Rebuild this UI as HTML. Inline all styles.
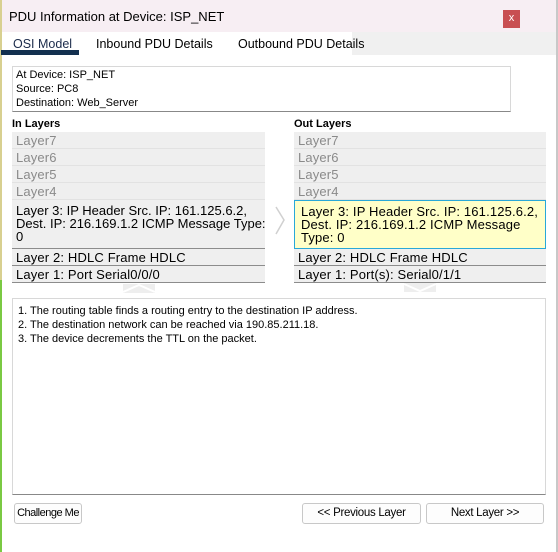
<!DOCTYPE html>
<html><head><style>
*{margin:0;padding:0;box-sizing:border-box}
body{width:558px;height:552px;background:#fff;font-family:"Liberation Sans",Arial,sans-serif;position:relative;overflow:hidden;color:#000}
.a{position:absolute}
.edge{left:0;width:2px}
.row{position:absolute;height:17px;background:#efefef;border-bottom:1px solid #e2e2e2;font-size:13px;letter-spacing:0.15px;line-height:17px;padding-left:4px;color:#8a8a8a;white-space:nowrap;overflow:hidden}
.dk{color:#000;border-bottom:1px solid #8c8c8c}
.btn{position:absolute;height:21px;border:1px solid #c8c8c8;border-radius:3px;background:#fdfdfd;font-size:11.5px;line-height:19px;text-align:center;letter-spacing:-0.3px;white-space:nowrap}
.t{font-size:11px;line-height:14px}
</style></head><body>
<div class="a edge" style="top:0;height:280px;background:#d8d090"></div>
<div class="a edge" style="top:280px;height:272px;background:#7ac943"></div>
<div class="a" style="right:0;top:0;width:2px;height:552px;background:#c8c8c8"></div>
<div class="a" style="left:2px;top:0;width:554px;height:32px;background:#f7eef3"></div>
<div class="a" style="left:9px;top:9px;font-size:13px">PDU Information at Device: ISP_NET</div>
<div class="a" style="left:503px;top:10px;width:17px;height:18px;background:#c84f52;color:#fff;font-size:11px;text-align:center;line-height:16px">x</div>
<div class="a" style="left:352px;top:32px;width:204px;height:23px;background:#f0f0f0"></div>
<div class="a" style="left:13px;top:37px;font-size:12.5px;color:#1a2a4a">OSI Model</div>
<div class="a" style="left:1px;top:50px;width:78px;height:5px;background:#13304f"></div>
<div class="a" style="left:96px;top:37px;font-size:12.5px">Inbound PDU Details</div>
<div class="a" style="left:238px;top:37px;font-size:12.5px">Outbound PDU Details</div>

<div class="a t" style="left:12px;top:66px;width:499px;height:46px;border:1px solid #d8d8d8;border-bottom:1px solid #888;padding:1px 3px">At Device: ISP_NET<br>Source: PC8<br>Destination: Web_Server</div>

<div class="a" style="left:12px;top:118px;font-size:11px;font-weight:bold">In Layers</div>
<div class="a" style="left:294px;top:118px;font-size:11px;font-weight:bold">Out Layers</div>

<div class="row" style="left:12px;top:132px;width:253px">Layer7</div>
<div class="row" style="left:12px;top:149px;width:253px">Layer6</div>
<div class="row" style="left:12px;top:166px;width:253px">Layer5</div>
<div class="row" style="left:12px;top:183px;width:253px">Layer4</div>
<div class="row dk" style="left:12px;top:200px;width:253px;height:49px;padding-top:4px;line-height:13px;letter-spacing:0">Layer 3: IP Header Src. IP: 161.125.6.2,<br>Dest. IP: 216.169.1.2 ICMP Message Type:<br>0</div>
<div class="row dk" style="left:12px;top:249px;width:253px">Layer 2: HDLC Frame HDLC</div>
<div class="row dk" style="left:12px;top:266px;width:253px">Layer 1: Port Serial0/0/0</div>

<div class="row" style="left:294px;top:132px;width:252px">Layer7</div>
<div class="row" style="left:294px;top:149px;width:252px">Layer6</div>
<div class="row" style="left:294px;top:166px;width:252px">Layer5</div>
<div class="row" style="left:294px;top:183px;width:252px">Layer4</div>
<div class="row dk" style="left:294px;top:200px;width:252px;height:49px;padding:4px 0 0 6px;line-height:13px;background:#ffffc8;border:1px solid #29a8d8">Layer 3: IP Header Src. IP: 161.125.6.2,<br>Dest. IP: 216.169.1.2 ICMP Message<br>Type: 0</div>
<div class="row dk" style="left:294px;top:249px;width:252px">Layer 2: HDLC Frame HDLC</div>
<div class="row dk" style="left:294px;top:266px;width:252px">Layer 1: Port(s): Serial0/1/1</div>

<svg class="a" style="left:274px;top:206px" width="12" height="30"><path d="M2 1 L10 14 L2 28" fill="none" stroke="#d0d0d0" stroke-width="1.5"/></svg>
<svg class="a" style="left:122px;top:282px" width="34" height="11"><rect x="1" y="2" width="32" height="9" fill="#eee"/><path d="M1 10 L17 3 L33 10" fill="none" stroke="#fff" stroke-width="2"/></svg>
<svg class="a" style="left:403px;top:283px" width="34" height="11"><rect x="1" y="0" width="32" height="9" fill="#eee"/><path d="M1 1 L17 8 L33 1" fill="none" stroke="#fff" stroke-width="2"/></svg>

<div class="a t" style="left:12px;top:298px;width:534px;height:197px;border:1px solid #d8d8d8;border-bottom:1px solid #888;padding:5px 5px;line-height:14px">1. The routing table finds a routing entry to the destination IP address.<br>2. The destination network can be reached via 190.85.211.18.<br>3. The device decrements the TTL on the packet.</div>

<div class="btn" style="left:14px;top:503px;width:68px;font-size:11px;letter-spacing:-0.5px">Challenge Me</div>
<div class="btn" style="left:302px;top:503px;width:119px">&lt;&lt; Previous Layer</div>
<div class="btn" style="left:426px;top:503px;width:118px">Next Layer &gt;&gt;</div>
</body></html>
